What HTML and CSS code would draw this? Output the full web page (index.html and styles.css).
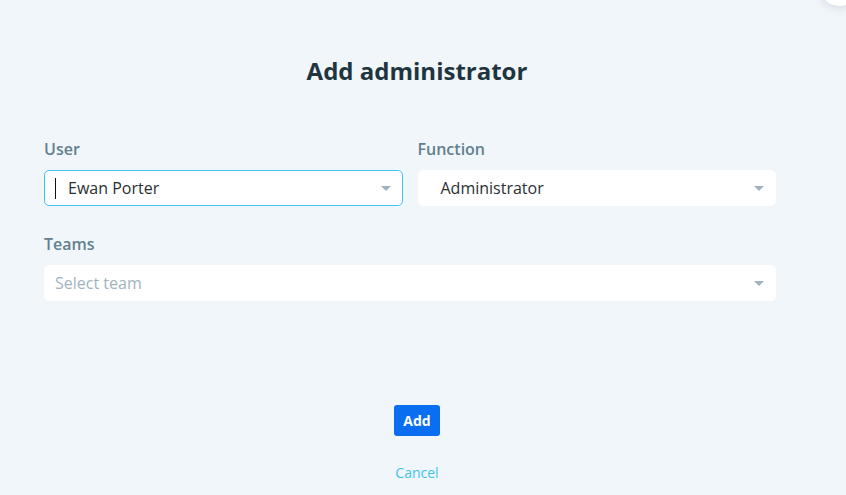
FILE: index.html
```html
<!DOCTYPE html>
<html lang="en">
<head>
  <meta charset="UTF-8">
  <title>Add administrator</title>
  <link rel="stylesheet" href="styles.css">
</head>
<body>

<div class="modal">
  <span class="close-btn"></span>

  <h1 class="modal-title">Add administrator</h1>

  <div class="form">
    <div class="form-row">
      <div class="field">
        <label class="field-label">User</label>
        <div class="select focused">
          <span class="caret"></span>
          <span class="value">Ewan Porter</span>
          <span class="arrow"></span>
        </div>
      </div>
      <div class="field">
        <label class="field-label">Function</label>
        <div class="select">
          <span class="value indent">Administrator</span>
          <span class="arrow"></span>
        </div>
      </div>
    </div>

    <div class="field">
      <label class="field-label">Teams</label>
      <div class="select">
        <span class="placeholder">Select team</span>
        <span class="arrow"></span>
      </div>
    </div>
  </div>

  <div class="actions">
    <button class="btn-add">Add</button>
    <a class="cancel" href="#">Cancel</a>
  </div>
</div>

</body>
</html>
```

FILE: styles.css
```css
body {
  margin: 0;
  background: #f1f6fa;
  font-family: "Open Sans", "Noto Sans", sans-serif;
  overflow: hidden;
}

.modal {
  width: 834px;
  height: 495px;
  position: relative;
}

.close-btn {
  position: absolute;
  top: -32px;
  right: -24px;
  width: 38px;
  height: 38px;
  border-radius: 50%;
  background: #fff;
  box-shadow: 0 2px 10px rgba(40, 70, 90, 0.15);
}

.modal-title {
  margin: 0;
  padding-top: 55px;
  text-align: center;
  font-size: 24px;
  font-weight: 700;
  line-height: 32px;
  color: #1e3540;
}

.form {
  width: 732px;
  margin: 52px 0 0 44px;
}

.form-row {
  display: flex;
  gap: 15px;
}

.form-row .field {
  flex: 1;
}

.field {
  margin-bottom: 28px;
}

.field-label {
  display: block;
  font-size: 16px;
  font-weight: 600;
  line-height: 20px;
  color: #62808f;
  margin-bottom: 11px;
}

.select {
  height: 36px;
  box-sizing: border-box;
  background: #fff;
  border: 1px solid #fff;
  border-radius: 5px;
  display: flex;
  align-items: center;
  padding: 0 10px;
  font-size: 16px;
  color: #2b2f33;
}

.select.focused {
  border-color: #3fc3ef;
}

.caret {
  width: 1px;
  height: 21px;
  background: #111;
  margin-right: 12px;
}

.value {
  flex: 1;
}

.value.indent {
  padding-left: 12px;
}

.placeholder {
  flex: 1;
  color: #9fb4c0;
}

.arrow {
  width: 0;
  height: 0;
  border-left: 5px solid transparent;
  border-right: 5px solid transparent;
  border-top: 5px solid #9fb3bf;
  margin-right: 1px;
}

.actions {
  display: flex;
  flex-direction: column;
  align-items: center;
  margin-top: 104px;
}

.btn-add {
  width: 46px;
  height: 31px;
  border: none;
  border-radius: 3px;
  background: #0a6ef0;
  color: #fff;
  font-family: inherit;
  font-size: 14px;
  font-weight: 700;
  padding: 0;
}

.cancel {
  margin-top: 27px;
  font-size: 14px;
  color: #3fc3ef;
  text-decoration: none;
}
```
